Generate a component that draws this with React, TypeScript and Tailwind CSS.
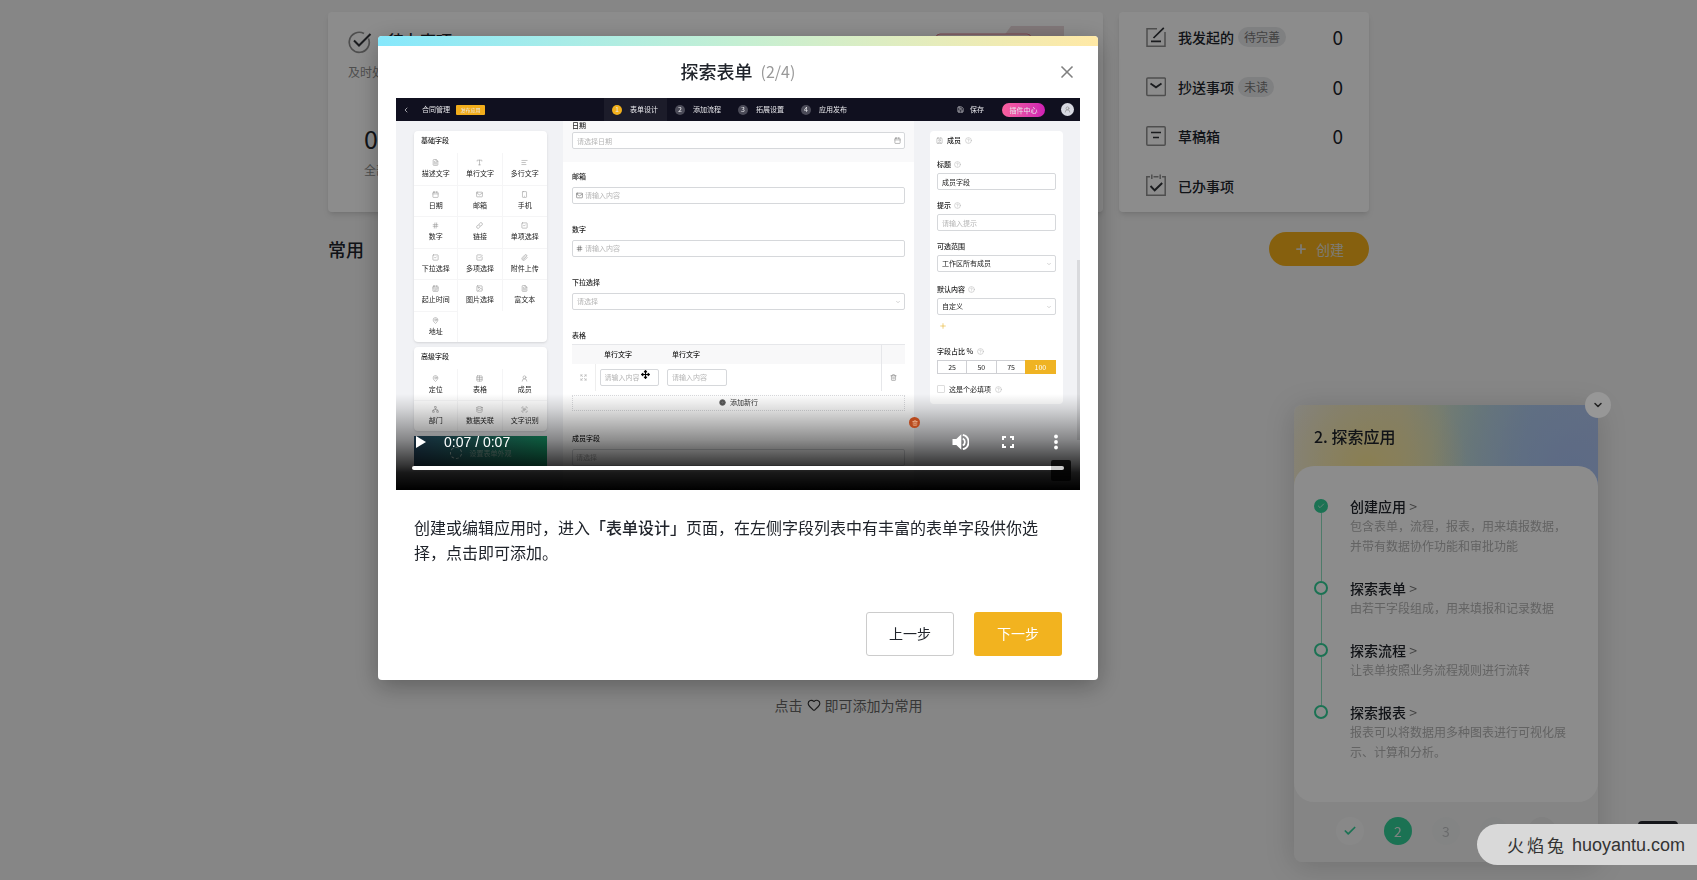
import React from "react";
import {
  AlignLeft, Calendar, CalendarRange, CheckSquare, ChevronDown, ChevronLeft, CircleHelp, CirclePlus, Contact, FileText,
  Hash, Heart, Image, Link as LinkIcon, Mail, MapPin, Move, Network, Paperclip, Plus, Save, ScanText, Smartphone,
  SquareCheck, Table, Trash2, Type, UserRound, X, Check, Database, Expand,
} from "lucide-react";

type Icon = React.ComponentType<{ className?: string; strokeWidth?: number }>;

const basicFields: [string, Icon][] = [
  ["描述文字", FileText], ["单行文字", Type], ["多行文字", AlignLeft],
  ["日期", Calendar], ["邮箱", Mail], ["手机", Smartphone],
  ["数字", Hash], ["链接", LinkIcon], ["单项选择", SquareCheck],
  ["下拉选择", SquareCheck], ["多项选择", CheckSquare], ["附件上传", Paperclip],
  ["起止时间", CalendarRange], ["图片选择", Image], ["富文本", FileText],
  ["地址", MapPin],
];

const advancedFields: [string, Icon][] = [
  ["定位", MapPin], ["表格", Table], ["成员", UserRound],
  ["部门", Network], ["数据关联", Database], ["文字识别", ScanText],
];

const designSteps = ["表单设计", "添加流程", "拓展设置", "应用发布"];

const tourSteps = [
  { title: "创建应用", text: "包含表单，流程，报表，用来填报数据，并带有数据协作功能和审批功能", done: true },
  { title: "探索表单", text: "由若干字段组成，用来填报和记录数据", done: false },
  { title: "探索流程", text: "让表单按照业务流程规则进行流转", done: false },
  { title: "探索报表", text: "报表可以将数据用多种图表进行可视化展示、计算和分析。", done: false },
];

const glyph = "h-5 w-5 shrink-0";

function DraftIcon() {
  return (
    <svg viewBox="0 0 20 20" fill="none" className={glyph}>
      <path d="M11 1.8H1v17.400h18V5" stroke="#8f8f8f" strokeWidth="1.500" />
      <path d="M7.500 11 17.800.8M5 14.300h10" stroke="#303338" strokeWidth="1.700" />
    </svg>
  );
}
function InboxIcon() {
  return (
    <svg viewBox="0 0 20 20" fill="none" className={glyph}>
      <rect x=".8" y="1" width="18.600" height="17.500" rx="1" stroke="#8f8f8f" strokeWidth="1.500" />
      <path d="m4.500 6.500 5.500 3.800 5.500-3.800" stroke="#303338" strokeWidth="1.800" />
    </svg>
  );
}
function BoxIcon() {
  return (
    <svg viewBox="0 0 20 20" fill="none" className={glyph}>
      <rect x=".8" y=".8" width="18.400" height="18.400" rx="1" stroke="#8f8f8f" strokeWidth="1.500" />
      <path d="M5 6.500h10M7 11.500h6" stroke="#303338" strokeWidth="1.700" />
    </svg>
  );
}
function DoneIcon() {
  return (
    <svg viewBox="0 0 20 20" fill="none" className="h-5 w-5 shrink-0 overflow-visible">
      <path d="M4 .8H.8v18.400h18.400V.8H16M7.500.8h5M5.800-1.500v4.500M14.200-1.500v4.500" stroke="#8f8f8f" strokeWidth="1.500" />
      <path d="m4.500 10 4.200 4.300 7.500-7.300" stroke="#303338" strokeWidth="1.900" />
    </svg>
  );
}

const summary = [
  { name: "我发起的", tag: "待完善", count: "0", icon: <DraftIcon /> },
  { name: "抄送事项", tag: "未读", count: "0", icon: <InboxIcon /> },
  { name: "草稿箱", tag: "", count: "0", icon: <BoxIcon /> },
  { name: "已办事项", tag: "", count: "", icon: <DoneIcon /> },
];

function Dashboard() {
  return (
    <main className="mx-auto w-full max-w-[1041px] pt-3">
      <div className="flex h-[200px] gap-4">
        <section className="relative flex flex-1 flex-col rounded bg-white px-5 pt-[18px] shadow-md">
          <div className="flex items-center gap-4">
            <svg viewBox="0 0 24 24" fill="none" className="h-6 w-6">
              <path d="M20.500 8.500A10 10 0 1 1 16 3.500" stroke="#8f8f8f" strokeWidth="1.700" />
              <path d="m6 10.500 5 5L22.500 4" stroke="#303338" strokeWidth="2" />
            </svg>
            <h2 className="-mt-1 text-[16px] leading-6 font-medium">待办事项</h2>
          </div>
          <p className="mt-2 text-[12px] leading-5 text-[#8f8f8f]">及时处理</p>
          <p className="mt-[38px] pl-4 text-[25px] leading-9">0</p>
          <p className="pl-4 text-[12px] leading-7 text-[#8f8f8f]">全部</p>
          <svg viewBox="0 0 150 40" fill="none" className="absolute top-3 right-8 h-10 w-[150px]">
            <path d="M80 16 90 2h53v20H80z" fill="#ead9db" />
            <rect x="15" y="10" width="95" height="28" rx="4" fill="#f3e3e4" stroke="#e0808c" />
          </svg>
        </section>
        <ul className="flex w-[250px] flex-col rounded bg-white pr-[26px] pb-px pl-[27px] shadow-md">
          {summary.map((s) => (
            <li key={s.name} className="flex h-[50px] items-center">
              {s.icon}
              <span className="ml-3 text-[14px] leading-5 font-medium">{s.name}</span>
              {s.tag && (
                <span className="ml-1 rounded-full bg-[#e8e9eb] px-[6px] text-[12px] leading-5 text-[#777]">{s.tag}</span>
              )}
              <span className="ml-auto text-[19px] leading-6">{s.count}</span>
            </li>
          ))}
        </ul>
      </div>
      <div className="mt-5 flex items-center justify-between">
        <h2 className="text-[18px] leading-6 font-medium">常用</h2>
        <button className="flex h-[34px] w-[100px] items-center justify-center gap-2 rounded-full bg-[#f4b01a] text-[14px] text-[#e4e0d6]">
          <Plus className="h-[14px] w-[14px]" strokeWidth={3} />
          创建
        </button>
      </div>
      <p className="mt-[429px] flex items-center justify-center gap-1 text-[14px] leading-5 text-[#666]">
        点击
        <Heart className="h-[14px] w-[14px] text-[#333]" />
        即可添加为常用
      </p>
    </main>
  );
}

function TourPanel() {
  return (
    <aside className="fixed right-[99px] bottom-[18px] flex w-[304px] flex-col rounded-lg bg-[#f3f3f3] shadow-[0_4px_30px_rgba(0,0,0,0.16)]">
      <header className="h-[85px] rounded-t-lg bg-[radial-gradient(circle_at_24%_72%,#fbe796_0%,transparent_42%),radial-gradient(circle_at_92%_75%,#a9c2f2_0%,transparent_50%),linear-gradient(90deg,#f1efea_0%,#ece8c8_35%,#c3dfd6_58%,#b4d2ea_78%,#bacbee_100%)] px-5 pt-[17px]">
        <h2 className="text-[16px] leading-7 font-medium">2. 探索应用</h2>
      </header>
      <ol className="-mt-6 h-[336px] rounded-[20px] bg-white px-5 pt-[30px]">
        {tourSteps.map((s, i) => (
          <li key={s.title} className="flex gap-[22px]">
            <div className="flex w-[14px] flex-col items-center pt-[3px]">
              {s.done ? (
                <span className="flex h-[14px] w-[14px] items-center justify-center rounded-full bg-[#32cf98]">
                  <Check className="h-2 w-2 text-white" />
                </span>
              ) : (
                <span className="h-[14px] w-[14px] rounded-full border-2 border-[#32cf98]" />
              )}
              {i < 3 && <span className="-mb-[3px] w-px flex-1 bg-[#8ee0c2]" />}
            </div>
            <div className="w-[220px] pb-5">
              <a href="#" className="block text-[14px] leading-5 font-medium">
                {s.title} <span className="font-normal text-[#777]">&gt;</span>
              </a>
              <p className="pb-[2px] text-[12px] leading-5 text-[#b4b4b4]">{s.text}</p>
            </div>
          </li>
        ))}
      </ol>
      <div className="flex h-[60px] items-center justify-center gap-5 pb-[2px] text-[14px] text-[#c0c2c4]">
        <span className="flex h-7 w-7 items-center justify-center rounded-full bg-[#f7f8f8]">
          <Check className="h-[14px] w-[14px] text-[#32cf98]" strokeWidth={3} />
        </span>
        <span className="flex h-7 w-7 items-center justify-center rounded-full bg-[#32cf98] text-[#e6efe9]">2</span>
        <span className="flex h-7 w-7 items-center justify-center rounded-full bg-[#eff0f0]">3</span>
        <span className="h-7 w-7 rounded-full bg-[#eff0f0]" />
        <span className="h-7 w-7 rounded-full bg-[#ebebeb]" />
      </div>
    </aside>
  );
}

function Palette({ title, fields, rows }: { title: string; fields: [string, Icon][]; rows: string }) {
  return (
    <section className={`flex flex-col rounded-sm bg-white shadow-sm ${rows}`}>
      <h3 className="px-[7px] pt-1 leading-[10px] font-medium text-[#222]">{title}</h3>
      <ul className="mt-[8px] grid flex-1 auto-rows-fr grid-cols-3">
        {fields.map(([name, I], i) => (
          <li
            key={name}
            className={`flex flex-col items-center justify-center gap-px border-[#f5f5f6] text-[#222] ${i % 3 < 2 ? "border-r" : ""} ${i >= 3 ? "border-t" : ""}`}
          >
            <I className="h-[7px] w-[7px] text-[#999]" strokeWidth={2} />
            <span className="leading-[12px]">{name}</span>
          </li>
        ))}
      </ul>
    </section>
  );
}

const box = "h-[17px] w-full rounded-xs border border-[#d6d8db] bg-white px-1 text-[7px] text-[#222] placeholder:text-[#b5b5b5]";

function FormField({ label, hint, icon: I }: { label: string; hint: string; icon?: Icon }) {
  return (
    <label className="mb-5 block">
      <span className="block leading-[10px] font-medium">{label}</span>
      <span className="mt-[6px] flex h-[17px] items-center gap-[2px] rounded-xs border border-[#d6d8db] bg-white px-[3px]">
        {I && <I className="h-[7px] w-[7px] shrink-0 text-[#666]" />}
        <input className="w-full text-[7px] placeholder:text-[#b5b5b5]" placeholder={hint} />
      </span>
    </label>
  );
}

function PickField({ label, value, id, help }: { label: string; value: string; id: string; help?: boolean }) {
  return (
    <div>
      <label htmlFor={id} className="flex items-center gap-[3px] leading-[10px] font-medium">
        {label}
        {help && <CircleHelp className="h-[7px] w-[7px] text-[#bbb]" />}
      </label>
      <div className="mt-1 grid items-center">
        <select id={id} className={`${box} col-start-1 row-start-1 appearance-none`}>
          <option>{value}</option>
        </select>
        <ChevronDown className="pointer-events-none col-start-1 row-start-1 mr-1 h-[6px] w-[6px] justify-self-end text-[#aaa]" />
      </div>
    </div>
  );
}

function VideoFrame() {
  return (
    <div className="relative mx-[18px] flex h-[392px] flex-col overflow-hidden bg-[#f1f2f5] text-[7px] text-[#222]">
      <div className="flex h-[23px] shrink-0 items-center bg-[#10101f] text-[#e8e8ec]">
        <div className="flex w-[208px] items-center pl-[6px]">
          <ChevronLeft className="h-[8px] w-[8px]" />
          <span className="ml-3">合同管理</span>
          <span className="ml-[6px] w-[29px] rounded-[1px] bg-[#f2ad1b] text-center text-[5px] leading-[10px]">发布应用</span>
        </div>
        {designSteps.map((s, i) => (
          <div key={s} className={`flex h-full w-[63px] items-center gap-2 pl-2 ${i === 0 ? "bg-[#1c1c2a]" : ""}`}>
            <span className={`flex h-[10px] w-[10px] items-center justify-center rounded-full ${i === 0 ? "bg-[#f2b01c]" : "bg-[#4b4b58]"}`}>
              {i + 1}
            </span>
            {s}
          </div>
        ))}
        <div className="ml-auto flex items-center pr-[6px]">
          <Save className="h-[7px] w-[7px]" />
          <span className="ml-[6px]">保存</span>
          <span className="ml-[18px] w-[43px] rounded-full bg-linear-to-r from-[#f9609c] to-[#cf1fb4] text-center leading-[14px]">插件中心</span>
          <span className="ml-4 flex h-[13px] w-[13px] items-center justify-center rounded-full bg-[#d7d9e2]">
            <UserRound className="h-[7px] w-[7px] text-[#888]" />
          </span>
        </div>
      </div>

      <div className="flex flex-1">
        <div className="flex w-[151px] flex-col gap-[5px] pt-[10px] pl-[18px]">
          <Palette title="基础字段" fields={basicFields} rows="h-[211px]" />
          <Palette title="高级字段" fields={advancedFields} rows="h-[84px]" />
          <div className="flex h-[34px] items-center justify-center gap-2 bg-linear-to-r from-[#264b66] to-[#15a06c] text-[#8fb5a8]">
            <span className="h-3 w-3 rounded-full border border-dashed border-[#b5cfc8]" />
            设置表单外观
          </div>
        </div>

        <div className="ml-4 w-[351px] bg-white">
          <div className="h-[41px] bg-[#f9f9fa] px-[9px]">
            <label htmlFor="date" className="block leading-[8px] font-medium">日期</label>
            <div className="grid items-center">
              <input id="date" className={`${box} col-start-1 row-start-1 mt-[3px]`} placeholder="请选择日期" />
              <Calendar className="col-start-1 row-start-1 mt-[3px] mr-1 h-[7px] w-[7px] justify-self-end text-[#888]" />
            </div>
          </div>
          <div className="px-[9px] pt-[9px]">
            <FormField label="邮箱" hint="请输入内容" icon={Mail} />
            <FormField label="数字" hint="请输入内容" icon={Hash} />
            <div className="mb-5">
              <label htmlFor="drop" className="block leading-[10px] font-medium">下拉选择</label>
              <div className="mt-[6px] grid items-center">
                <select id="drop" className="col-start-1 row-start-1 h-[17px] w-full appearance-none rounded-xs border border-[#d6d8db] bg-white px-1 text-[7px] text-[#b5b5b5]">
                  <option>请选择</option>
                </select>
                <ChevronDown className="pointer-events-none col-start-1 row-start-1 mr-1 h-[6px] w-[6px] justify-self-end text-[#aaa]" />
              </div>
            </div>
            <p className="leading-[10px] font-medium">表格</p>
            <table className="mt-1 w-full table-fixed border-collapse border-t border-[#e6e7ea] text-left">
              <thead>
                <tr className="h-[19px] bg-[#f8f8f9]">
                  <th className="w-[23px]" />
                  <th className="w-[68px] pl-[9px] font-medium">单行文字</th>
                  <th className="pl-[9px] font-medium">单行文字</th>
                  <th className="w-[24px] border-l border-[#e6e7ea]" />
                </tr>
              </thead>
              <tbody>
                <tr className="h-[27px]">
                  <td className="border-r border-[#eee]"><Expand className="mx-auto h-[7px] w-[7px] text-[#aaa]" /></td>
                  <td className="px-1"><input aria-label="单行文字" className={box} placeholder="请输入内容" /></td>
                  <td className="px-1"><div className="w-[60px]"><input aria-label="单行文字" className={box} placeholder="请输入内容" /></div></td>
                  <td className="border-l border-[#e6e7ea]"><Trash2 className="mx-auto h-[7px] w-[7px] text-[#888]" /></td>
                </tr>
              </tbody>
            </table>
            <button className="mt-1 flex h-[16px] w-full items-center justify-center gap-1 border border-dotted border-[#d9dadd] text-[#333]">
              <CirclePlus className="h-[7px] w-[7px] fill-[#555] text-[#777]" />
              添加新行
            </button>
            <div className="mt-[22px]">
              <FormField label="成员字段" hint="请选择" />
            </div>
          </div>
        </div>

        <div className="ml-4 w-[133px] pt-[10px]">
          <section className="h-[273px] rounded-sm bg-white px-[7px] pt-1">
            <h3 className="flex items-center gap-1 leading-[10px] font-medium">
              <Contact className="-ml-px h-[7px] w-[7px] text-[#aaa]" />
              成员
              <CircleHelp className="h-[7px] w-[7px] text-[#bbb]" />
            </h3>
            <label className="mt-[14px] block">
              <span className="flex items-center gap-[3px] leading-[10px] font-medium">标题 <CircleHelp className="h-[7px] w-[7px] text-[#bbb]" /></span>
              <input className={`${box} mt-1 block`} defaultValue="成员字段" />
            </label>
            <label className="mt-[10px] block">
              <span className="flex items-center gap-[3px] leading-[10px] font-medium">提示 <CircleHelp className="h-[7px] w-[7px] text-[#bbb]" /></span>
              <input className={`${box} mt-1 block`} placeholder="请输入提示" />
            </label>
            <div className="mt-[10px]"><PickField id="scope" label="可选范围" value="工作区所有成员" /></div>
            <div className="mt-3"><PickField id="preset" label="默认内容" value="自定义" help /></div>
            <Plus className="mt-[7px] ml-[2px] h-[8px] w-[8px] text-[#e8b93a]" />
            <p className="mt-4 flex items-center gap-1 leading-[10px] font-medium">字段占比 % <CircleHelp className="h-[7px] w-[7px] text-[#bbb]" /></p>
            <div className="mt-1 grid h-[14px] grid-cols-4 border border-[#cfd0d4] text-center leading-[12px]">
              <button className="border-r border-[#cfd0d4]">25</button>
              <button className="border-r border-[#cfd0d4]">50</button>
              <button>75</button>
              <button className="-m-px bg-[#efb323] text-white">100</button>
            </div>
            <label className="mt-[10px] flex items-center gap-1 leading-[10px]">
              <input type="checkbox" className="h-[8px] w-[8px] appearance-none rounded-[1px] border border-[#ddd]" />
              这是个必填项
              <CircleHelp className="h-[7px] w-[7px] text-[#bbb]" />
            </label>
          </section>
        </div>
      </div>

      <Move className="absolute top-[272px] left-[245px] h-[9px] w-[9px] text-black" strokeWidth={3} />
      <span className="absolute top-[162px] right-0 h-[180px] w-[3px] bg-[#d9dadd]" />
      <div className="absolute inset-x-0 bottom-0 h-[96px] bg-[linear-gradient(180deg,rgba(0,0,0,0)_0%,rgba(0,0,0,0.12)_15%,rgba(0,0,0,0.45)_48%,rgba(0,0,0,0.78)_74%,rgba(0,0,0,0.9)_82%,#000_100%)]" />
      <span className="absolute top-[319px] left-[513px] flex h-[11px] w-[11px] items-center justify-center rounded-full bg-[#b84a1e]">
        <Trash2 className="h-[6px] w-[6px] text-[#f5c9a8]" />
      </span>
      <div className="absolute inset-x-4 bottom-5 flex flex-col text-white">
        <div className="flex h-6 items-center">
          <button aria-label="播放" className="ml-1">
            <svg viewBox="0 0 10 12" className="h-3 w-[10px] fill-white"><path d="M0 0v12l10-6z" /></svg>
          </button>
          <span className="ml-[18px] font-['Liberation_Sans',sans-serif] text-[14px] leading-4">0:07 / 0:07</span>
          <button aria-label="音量" className="ml-auto">
            <svg viewBox="0 0 18 18" className="h-[18px] w-[18px]">
              <path d="M1.500 6v6h3.800l5 4.800V1.200L5.300 6z" fill="#fff" />
              <path d="M11.800 5.500a4 4 0 0 1 0 7M11.800 1.800a7.400 7.400 0 0 1 0 14.400" fill="none" stroke="#fff" strokeWidth="1.800" />
            </svg>
          </button>
          <button aria-label="全屏" className="ml-8">
            <svg viewBox="0 0 14 14" className="h-[14px] w-[14px]" fill="none" stroke="#fff" strokeWidth="2">
              <path d="M5 2H2v3M9 2h3v3M5 12H2V9M9 12h3V9" />
            </svg>
          </button>
          <button aria-label="更多" className="mr-[5px] ml-[38px]">
            <svg viewBox="0 0 6 16" className="h-4 w-[6px] fill-white">
              <circle cx="3" cy="2.500" r="1.900" /><circle cx="3" cy="8" r="1.900" /><circle cx="3" cy="13.500" r="1.900" />
            </svg>
          </button>
        </div>
        <div className="mt-3 h-1 rounded-full bg-white" />
      </div>
      <span className="absolute right-[9px] bottom-[9px] h-[21px] w-5 rounded-xs bg-black/80" />
      <span className="absolute right-4 bottom-5 h-1 w-4 rounded-full bg-white/75" />
    </div>
  );
}

function TourDialog() {
  return (
    <div className="fixed inset-0 flex items-start justify-center bg-black/45 pt-9 pr-[221px]">
      <div role="dialog" aria-label="探索表单" className="w-[720px] overflow-hidden rounded bg-white pb-6 shadow-[0_6px_24px_rgba(0,0,0,0.3)]">
        <div className="h-[10px] bg-linear-to-r from-[#86e8fc] via-[#c4efd3] to-[#ffe9a6]" />
        <div className="relative flex h-[52px] items-center justify-center gap-2 pb-[3px]">
          <h1 className="text-[18px] leading-6 font-medium">探索表单</h1>
          <span className="text-[16px] leading-6 text-[#999]">(2/4)</span>
          <button aria-label="关闭" className="absolute top-4 right-[21px] text-[#808080]">
            <X className="h-5 w-5" strokeWidth={2} />
          </button>
        </div>
        <VideoFrame />
        <p className="mx-9 mt-[25px] text-[16px] leading-[25px]">
          创建或编辑应用时，进入<b className="font-medium">「表单设计」</b>页面，在左侧字段列表中有丰富的表单字段供你选择，点击即可添加。
        </p>
        <div className="mx-9 mt-[47px] flex justify-end gap-5 text-[14px]">
          <button className="h-11 w-[88px] rounded-[3px] border border-[#ccc] pb-[2px]">上一步</button>
          <button className="h-11 w-[88px] rounded-[3px] bg-[#f2b31f] pb-[2px] text-white">下一步</button>
        </div>
      </div>
    </div>
  );
}

export default function App() {
  return (
    <div className="min-h-screen bg-[#f4f4f4] font-['Noto_Sans_CJK_SC',sans-serif] text-[#20242b]">
      <Dashboard />
      <TourPanel />
      <TourDialog />
      <button
        aria-label="收起"
        className="fixed right-[86px] bottom-[462px] flex h-[26px] w-[26px] items-center justify-center rounded-full bg-[#979797] text-[#222]"
      >
        <ChevronDown className="h-3 w-3" strokeWidth={3} />
      </button>
      <span className="fixed right-[19px] bottom-[29px] h-[30px] w-10 rounded bg-[#15161a]" />
      <div className="fixed right-0 bottom-[15px] flex h-[41px] w-[220px] items-center justify-end rounded-l-full bg-[#d9d9d9] pr-3 text-[#333]">
        <span className="flex gap-[3px] text-[17px] leading-7">
          <span>火</span>
          <span>焰</span>
          <span>兔</span>
        </span>
        <span className="ml-2 font-['Liberation_Sans',sans-serif] text-[18px] leading-7">huoyantu.com</span>
      </div>
    </div>
  );
}
